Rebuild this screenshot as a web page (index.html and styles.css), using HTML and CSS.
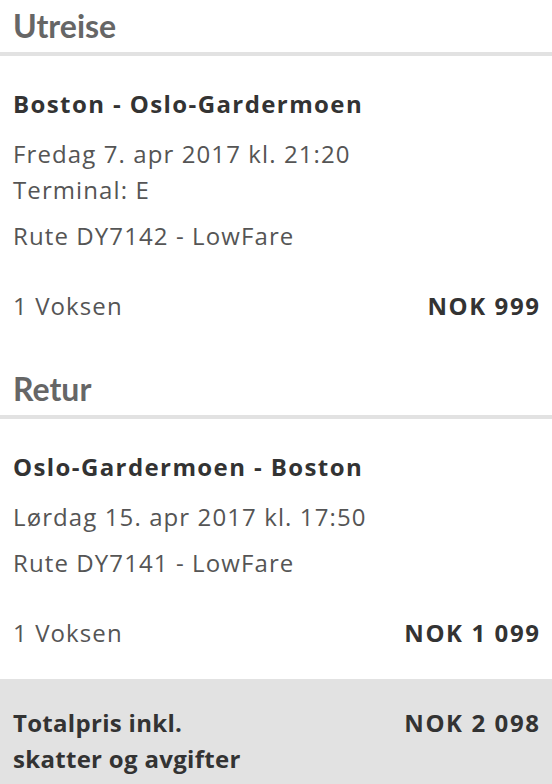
FILE: index.html
```html
<!DOCTYPE html>
<html lang="no">
<head>
<meta charset="utf-8">
<link rel="stylesheet" href="styles.css">
</head>
<body>
<div class="summary">
  <section class="leg">
    <h2 class="leg-title">Utreise</h2>
    <div class="leg-body">
      <div class="route">Boston - Oslo-Gardermoen</div>
      <div class="info">
        <div class="line">Fredag 7. apr 2017 kl. 21:20</div>
        <div class="line">Terminal: E</div>
      </div>
      <div class="line flight">Rute DY7142 - LowFare</div>
      <div class="price-row">
        <span class="pax">1 Voksen</span>
        <span class="price">NOK 999</span>
      </div>
    </div>
  </section>
  <section class="leg">
    <h2 class="leg-title">Retur</h2>
    <div class="leg-body">
      <div class="route">Oslo-Gardermoen - Boston</div>
      <div class="info">
        <div class="line">Lørdag 15. apr 2017 kl. 17:50</div>
      </div>
      <div class="line flight">Rute DY7141 - LowFare</div>
      <div class="price-row">
        <span class="pax">1 Voksen</span>
        <span class="price">NOK 1 099</span>
      </div>
    </div>
  </section>
  <div class="total">
    <div class="total-label">Totalpris inkl.<br>skatter og avgifter</div>
    <div class="total-price">NOK 2 098</div>
  </div>
</div>
</body>
</html>
```
FILE: styles.css
```css
html, body {
  margin: 0;
  padding: 0;
  background: #fff;
}
body {
  font-family: "Open Sans", Lato, sans-serif;
  color: #555;
  width: 552px;
  height: 784px;
  overflow: hidden;
}
.summary {
  display: flex;
  flex-direction: column;
  min-height: 784px;
}
.leg-title {
  margin: 0;
  padding: 6px 13px 6px;
  font-family: Lato, sans-serif;
  font-size: 32px;
  line-height: 40px;
  font-weight: 700;
  color: #666;
  border-bottom: 4px solid #e2e2e2;
}
.leg-body {
  padding: 32px 13px 39px;
}
.route {
  font-size: 24px;
  line-height: 32px;
  font-weight: 700;
  letter-spacing: 1.4px;
  color: #333;
}
.info {
  margin-top: 16px;
}
.line {
  font-size: 24px;
  line-height: 36px;
  letter-spacing: 1.1px;
}
.flight {
  margin-top: 10px;
}
.price-row {
  margin-top: 34px;
  display: flex;
  justify-content: space-between;
  font-size: 24px;
  line-height: 36px;
  letter-spacing: 1.1px;
}
.price {
  font-weight: 700;
  letter-spacing: 1.6px;
  margin-right: -1.6px;
  color: #333;
}
.leg + .leg .leg-body {
  padding-bottom: 28px;
}
.total {
  flex: 1;
  background: #e2e2e2;
  display: flex;
  justify-content: space-between;
  padding: 26px 13px 0;
  font-size: 24px;
  line-height: 36px;
  font-weight: 700;
  color: #333;
}
.total-label {
  letter-spacing: 0.3px;
}
.total-price {
  letter-spacing: 1.6px;
  margin-right: -1.6px;
}
```
